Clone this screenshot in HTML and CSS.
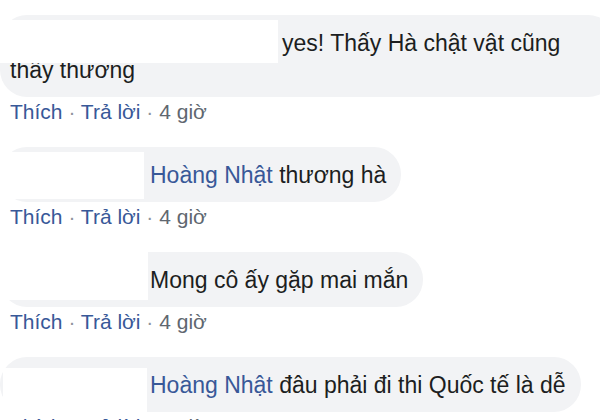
FILE: index.html
```html
<!DOCTYPE html>
<html lang="vi">
<head>
    <meta charset="UTF-8">
    <meta name="viewport" content="width=device-width, initial-scale=1.0">
    <title>Bình luận</title>
    <link rel="stylesheet" href="styles.css">
</head>
<body>
    <div class="comments">
        <div class="comment">
            <div class="bubble">
                <span class="hide hide-1"></span>
                <span class="name name-long"></span>yes! Thấy Hà chật vật cũng thây thương
            </div>
            <div class="actions">
                <a href="#">Thích</a> <span class="dot">·</span> <a href="#">Trả lời</a> <span class="dot">·</span> <span class="time">4 giờ</span>
            </div>
        </div>

        <div class="comment">
            <div class="bubble">
                <span class="hide hide-2"></span>
                <span class="name"></span><a class="mention" href="#">Hoàng Nhật</a> thương hà
            </div>
            <div class="actions">
                <a href="#">Thích</a> <span class="dot">·</span> <a href="#">Trả lời</a> <span class="dot">·</span> <span class="time">4 giờ</span>
            </div>
        </div>

        <div class="comment">
            <div class="bubble">
                <span class="hide hide-3"></span>
                <span class="name"></span>Mong cô ấy gặp mai mắn
            </div>
            <div class="actions">
                <a href="#">Thích</a> <span class="dot">·</span> <a href="#">Trả lời</a> <span class="dot">·</span> <span class="time">4 giờ</span>
            </div>
        </div>

        <div class="comment">
            <div class="bubble">
                <span class="hide hide-4"></span>
                <span class="name"></span><a class="mention" href="#">Hoàng Nhật</a> đâu phải đi thi Quốc tế là dễ
            </div>
            <div class="actions">
                <a href="#">Thích</a> <span class="dot">·</span> <a href="#">Trả lời</a> <span class="dot">·</span> <span class="time">4 giờ</span>
            </div>
        </div>
    </div>
</body>
</html>
```

FILE: styles.css
```css
body {
    margin: 0;
    background-color: #fff;
    font-family: "Liberation Sans", Arial, sans-serif;
    color: #1c1e21;
    overflow: hidden;
}

.comments {
    width: 640px;
    padding-top: 15px;
}

.comment {
    margin-bottom: 22px;
}

.bubble {
    position: relative;
    display: inline-block;
    max-width: 590px;
    padding: 15px 15px 13px 10px;
    background-color: #f2f3f5;
    border-radius: 27px;
    font-size: 23px;
    line-height: 27px;
}

/* name is blanked out in the screenshot */
.name {
    display: inline-block;
    width: 140px;
}

.name-long {
    width: 272px;
}

.hide {
    position: absolute;
    background-color: #fff;
}

.hide-1 {
    left: 0;
    top: 5px;
    width: 278px;
    height: 43px;
}

.hide-2 {
    left: 0;
    top: 5px;
    width: 144px;
    height: 47px;
}

.hide-3 {
    left: 0;
    top: 0;
    width: 148px;
    height: 48px;
}

.hide-4 {
    left: 3px;
    top: 11px;
    width: 144px;
    height: 44px;
}

.mention {
    color: #385898;
    text-decoration: none;
}

.actions {
    margin-top: 2px;
    padding-left: 10px;
    font-size: 21px;
    line-height: 26px;
}

.actions a {
    color: #385898;
    text-decoration: none;
}

.dot {
    color: #90949c;
}

.time {
    color: #606770;
}
```
